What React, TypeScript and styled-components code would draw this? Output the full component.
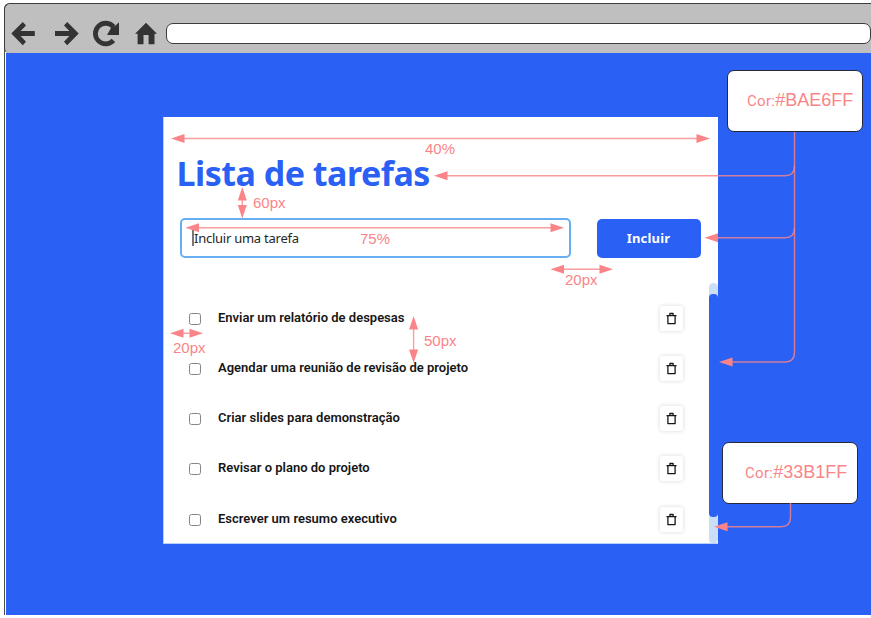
import React from "react";
import styled, { createGlobalStyle } from "styled-components";

const BLUE = "#2b60f5";
const PINK = "#fb8488";

const GlobalStyle = createGlobalStyle`
  * { box-sizing: border-box; }
  body { margin: 0; background: #fff; overflow: hidden; }
  button, input { font: inherit; }
`;

const Page = styled.div`
  position: relative;
  width: 871px;
  height: 618px;
  padding: 3px 0 3px 4px;
  overflow: hidden;
  font-family: Roboto, sans-serif;
`;

const BrowserWindow = styled.div`
  display: flex;
  flex-direction: column;
  height: 612px;
  border-left: 1px solid #4b4b52;
  border-top-left-radius: 6px;
`;

const Toolbar = styled.header`
  display: flex;
  flex: none;
  align-items: flex-start;
  height: 50px;
  margin-left: -1px;
  border: solid #3d3d3d;
  border-width: 1px 0 0 1px;
  border-radius: 6px 0 0 5px;
  background: #bfbfbf;
`;

const NavIcons = styled.svg`
  flex: none;
  width: 161px;
  height: 49px;
  fill: #333;
`;

const AddressBar = styled.div`
  flex: 1;
  height: 21px;
  margin-top: 19px;
  border: 1px solid #3c3c3c;
  border-radius: 7px;
  background: #fff;
`;

const Viewport = styled.main`
  flex: 1;
  margin-left: 1px;
  padding: 64px 0 0 157px;
  background: ${BLUE};
`;

const Card = styled.section`
  display: flex;
  flex-direction: column;
  width: 555px;
  height: 427px;
  border: solid #b9cffb;
  border-width: 0 0 1px 1px;
  background: #fff;
`;

const Title = styled.h1`
  flex: none;
  margin: 0;
  padding: 39px 0 0 12.5px;
  height: 101px;
  font: 700 34px/34px "Noto Sans", sans-serif;
  letter-spacing: -0.5px;
  color: ${BLUE};
`;

const TaskForm = styled.div`
  display: flex;
  flex: none;
  gap: 26px;
  height: 40px;
  padding-left: 16px;
`;

const TaskField = styled.div`
  display: flex;
  align-items: center;
  width: 391px;
  height: 40px;
  padding: 0 0 1px 10px;
  border: 2px solid #68aef2;
  border-radius: 5px;
  font: 400 13px/18px "Noto Sans", sans-serif;
  letter-spacing: -0.25px;
  color: #262626;
`;

const Caret = styled.span`
  width: 1.5px;
  height: 16px;
  margin-right: 0.5px;
  background: #777;
`;

const AddButton = styled.button`
  width: 104px;
  height: 39px;
  margin: 0.5px 0 0 -0.5px;
  padding: 0 0 1px;
  border: 0;
  border-radius: 5px;
  background: ${BLUE};
  color: #fff;
  font: 700 13px/18px "Noto Sans", sans-serif;
  letter-spacing: 0.2px;
`;

const ListArea = styled.div`
  display: flex;
  flex: 1;
  min-height: 0;
  padding-top: 25px;
`;

const TaskList = styled.ul`
  flex: 1;
  margin: 0;
  padding: 10px 26px 0 25px;
  list-style: none;
`;

const TaskRow = styled.li`
  display: flex;
  align-items: center;
  height: 50.25px;
`;

const Checkbox = styled.span`
  width: 12px;
  height: 12px;
  margin-top: 1px;
  border: 1px solid #858585;
  border-radius: 2.5px;
`;

const TaskName = styled.span`
  flex: 1;
  margin: -1px 0 0 17px;
  font-size: 13px;
  font-weight: 600;
  line-height: 18px;
  color: #161616;
  white-space: nowrap;
`;

const DeleteButton = styled.button`
  display: flex;
  align-items: center;
  justify-content: center;
  width: 23px;
  height: 25px;
  padding: 0;
  border: 0;
  border-radius: 3px;
  background: #fff;
  box-shadow: 0 0 4px rgba(0, 0, 0, 0.16);
`;

const ScrollTrack = styled.div`
  width: 9px;
  padding-top: 11px;
  border-radius: 5px 5px 4px 4px;
  background: #cadef5;
`;

const ScrollThumb = styled.div`
  height: 223px;
  border-radius: 4px;
  background: ${BLUE};
`;

const Callout = styled.div<{ $x: number; $y: number; $indent: number }>`
  position: absolute;
  left: ${(p) => p.$x}px;
  top: ${(p) => p.$y}px;
  display: flex;
  align-items: baseline;
  width: 136px;
  height: 62px;
  padding: 19px 0 0 ${(p) => p.$indent}px;
  border: 1px solid #25293a;
  border-radius: 7px;
  background: #fff;
  color: ${PINK};
  white-space: nowrap;
`;

const CalloutKey = styled.span`
  font-size: 15px;
  font-weight: 400;
  letter-spacing: 0.3px;
`;

const CalloutValue = styled.span`
  font: 400 18px/21px "Liberation Sans", Arial, sans-serif;
`;

const Measures = styled.svg`
  position: absolute;
  inset: 0;
  width: 871px;
  height: 618px;
  fill: ${PINK};
  stroke: none;
  pointer-events: none;
`;

const Wire = styled.path`
  fill: none;
  stroke: ${PINK};
  stroke-width: 1.4;
  opacity: 0.8;
`;

const Measure = styled.span<{ $x: number; $y: number }>`
  position: absolute;
  left: ${(p) => p.$x}px;
  top: ${(p) => p.$y}px;
  font: 400 15px/18px "Liberation Sans", Arial, sans-serif;
  color: ${PINK};
`;

const tasks = [
  "Enviar um relatório de despesas",
  "Agendar uma reunião de revisão de projeto",
  "Criar slides para demonstração",
  "Revisar o plano do projeto",
  "Escrever um resumo executivo",
];

const wires = [
  "M180 138.5H700",
  "M444 175.7H785Q794.5 175.7 794.5 166V132",
  "M714 237.8H785Q794.5 237.8 794.5 228V166",
  "M729 362H785Q794.5 362 794.5 352V228",
  "M724 526.7H781Q790.5 526.7 790.5 517V503",
  "M242.3 195V210",
  "M195 227.8H555",
  "M560 269.2H603",
  "M413.6 325V355",
  "M180 333.3H193",
];

// Each head is [tip x, tip y, rotation]; zero rotation points left.
const heads: [number, number, number][] = [
  [171, 138.5, 0],
  [710, 138.5, 180],
  [434, 175.7, 0],
  [704.5, 237.8, 0],
  [719, 362, 0],
  [714, 526.7, 0],
  [242.3, 187, 90],
  [242.3, 218.5, 270],
  [185.5, 227.8, 0],
  [564, 227.8, 180],
  [550.5, 269.2, 0],
  [613, 269.2, 180],
  [413.6, 316, 90],
  [413.6, 363, 270],
  [170, 333.3, 0],
  [203, 333.3, 180],
];

const labels: [string, number, number][] = [
  ["40%", 425, 140],
  ["60px", 253, 194],
  ["75%", 360, 230],
  ["20px", 565, 271],
  ["50px", 424, 332],
  ["20px", 173, 339],
];

const TrashIcon = () => (
  <svg width="11" height="13" viewBox="0 0 11 13" fill="none" stroke="#161616" strokeWidth="1.3">
    <path d="M0.5 3.6H10.5M3.9 3.4V1.5H7.1V3.4M1.9 4V11.6H9.1V4" strokeLinejoin="round" />
  </svg>
);

export default function App() {
  return (
    <Page>
      <GlobalStyle />
      <BrowserWindow>
        <Toolbar>
          <NavIcons viewBox="5 4 161 49">
            <path d="M11.3 33.5L22.8 22L26 25.4L20.6 31H34.8V36H20.6L26 41.7L22.8 45.2Z" />
            <path d="M78.7 33.5L67.2 22L64 25.4L69.4 31H55V36H69.4L64 41.7L67.2 45.2Z" />
            <path
              d="M113.4 40.4A10.3 10.3 0 1 1 113.6 26.9"
              fill="none"
              stroke="#333"
              strokeWidth="4.8"
            />
            <path d="M119 22.3V35H107L111 28L115 26Z" />
            <path d="M146 22.8L157 33.7H154.5V44.2H148.6V35H143.5V44.2H137.6V33.7H135Z" />
          </NavIcons>
          <AddressBar />
        </Toolbar>
        <Viewport>
          <Card>
            <Title>Lista de tarefas</Title>
            <TaskForm>
              <TaskField>
                <Caret />
                Incluir uma tarefa
              </TaskField>
              <AddButton>Incluir</AddButton>
            </TaskForm>
            <ListArea>
              <TaskList>
                {tasks.map((task) => (
                  <TaskRow key={task}>
                    <Checkbox />
                    <TaskName>{task}</TaskName>
                    <DeleteButton aria-label="Excluir">
                      <TrashIcon />
                    </DeleteButton>
                  </TaskRow>
                ))}
              </TaskList>
              <ScrollTrack>
                <ScrollThumb />
              </ScrollTrack>
            </ListArea>
          </Card>
        </Viewport>
      </BrowserWindow>

      <Callout $x={727} $y={70} $indent={19}>
        <CalloutKey>Cor:</CalloutKey>
        <CalloutValue>#BAE6FF</CalloutValue>
      </Callout>
      <Callout $x={722} $y={442} $indent={22}>
        <CalloutKey>Cor:</CalloutKey>
        <CalloutValue>#33B1FF</CalloutValue>
      </Callout>

      <Measures viewBox="0 0 871 618">
        {wires.map((d) => (
          <Wire key={d} d={d} />
        ))}
        {heads.map(([x, y, angle]) => (
          <path
            key={`${x}-${y}`}
            d="M0 0L13.5 -4.5V4.5Z"
            transform={`translate(${x} ${y}) rotate(${angle})`}
          />
        ))}
      </Measures>
      {labels.map(([text, x, y]) => (
        <Measure key={`${x}-${y}`} $x={x} $y={y}>
          {text}
        </Measure>
      ))}
    </Page>
  );
}
